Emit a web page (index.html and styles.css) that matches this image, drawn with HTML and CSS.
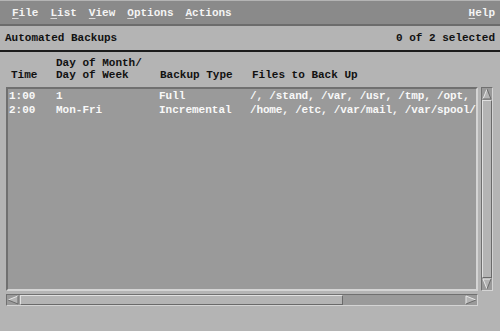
FILE: index.html
```html
<!DOCTYPE html>
<html lang="en">
<head>
  <meta charset="UTF-8">
  <title>Automated Backups</title>
  <link rel="stylesheet" href="styles.css">
</head>
<body>
  <div class="menubar">
    <span class="menu-item"><u>F</u>ile</span>
    <span class="menu-item"><u>L</u>ist</span>
    <span class="menu-item"><u>V</u>iew</span>
    <span class="menu-item"><u>O</u>ptions</span>
    <span class="menu-item"><u>A</u>ctions</span>
    <span class="menu-item help"><u>H</u>elp</span>
  </div>

  <div class="status">
    <span>Automated Backups</span>
    <span>0 of 2 selected</span>
  </div>

  <div class="headers">
    <div class="col-time">Time</div>
    <div class="col-day">Day of Month/<br>Day of Week</div>
    <div class="col-type">Backup Type</div>
    <div class="col-files">Files to Back Up</div>
  </div>

  <div class="list-area">
    <div class="list-box">
      <div class="row">
        <div>1:00</div>
        <div>1</div>
        <div>Full</div>
        <div class="files">/, /stand, /var, /usr, /tmp, /opt,</div>
      </div>
      <div class="row">
        <div>2:00</div>
        <div>Mon-Fri</div>
        <div>Incremental</div>
        <div class="files">/home, /etc, /var/mail, /var/spool/</div>
      </div>
    </div>

    <div class="vscroll">
      <svg class="arrow" width="10" height="12" viewBox="0 0 10 12">
        <polygon points="5,1 9,11 1,11" fill="#b4b4b4"/>
        <polyline points="1,11 5,1" fill="none" stroke="#e8e8e8" stroke-width="1"/>
        <polyline points="5,1 9,11 1,11" fill="none" stroke="#6a6a6a" stroke-width="1"/>
      </svg>
      <div class="vthumb"></div>
      <svg class="arrow" width="10" height="12" viewBox="0 0 10 12">
        <polygon points="1,1 9,1 5,11" fill="#b4b4b4"/>
        <polyline points="9,1 1,1 5,11" fill="none" stroke="#e8e8e8" stroke-width="1"/>
        <polyline points="9,1 5,11" fill="none" stroke="#6a6a6a" stroke-width="1"/>
      </svg>
    </div>

    <div class="hscroll">
      <svg class="arrow" width="12" height="10" viewBox="0 0 12 10">
        <polygon points="1,5 11,1 11,9" fill="#b4b4b4"/>
        <polyline points="11,1 1,5" fill="none" stroke="#e8e8e8" stroke-width="1"/>
        <polyline points="1,5 11,9 11,1" fill="none" stroke="#6a6a6a" stroke-width="1"/>
      </svg>
      <div class="hthumb"></div>
      <div class="htrough"></div>
      <svg class="arrow" width="12" height="10" viewBox="0 0 12 10">
        <polygon points="1,1 11,5 1,9" fill="#b4b4b4"/>
        <polyline points="1,9 1,1 11,5" fill="none" stroke="#e8e8e8" stroke-width="1"/>
        <polyline points="11,5 1,9" fill="none" stroke="#6a6a6a" stroke-width="1"/>
      </svg>
    </div>
  </div>
</body>
</html>
```

FILE: styles.css
```css
/* General Styles */
* {
  margin: 0;
  padding: 0;
  box-sizing: border-box;
}

body {
  font-family: 'Liberation Mono', 'DejaVu Sans Mono', monospace;
  font-size: 11px;
  font-weight: bold;
  background-color: #b4b4b4;
  color: #111;
  width: 500px;
  height: 331px;
  overflow: hidden;
}

/* Menu bar */
.menubar {
  display: flex;
  gap: 12px;
  margin-top: 1px;
  height: 25px;
  padding: 0 12px;
  align-items: center;
  background-color: #8a8a8a;
  border-bottom: 2px solid #6c6c6c;
  color: #f4f4f4;
}

.menu-item u {
  text-decoration-color: #d8d8d8;
  text-underline-offset: 2px;
}

.menu-item.help {
  margin-left: auto;
  margin-right: -7px;
}

/* Status line */
.status {
  display: flex;
  justify-content: space-between;
  align-items: center;
  height: 26px;
  padding: 0 5px;
  border-bottom: 2px solid #1c1c1c;
}

/* Column headers */
.headers {
  display: grid;
  grid-template-columns: 45px 104px 92px 1fr;
  align-items: end;
  height: 35px;
  padding: 0 0 6px 11px;
  line-height: 12px;
}

/* List + scrollbars */
.list-area {
  display: grid;
  grid-template-columns: 472px 12px;
  grid-template-rows: 204px 12px;
  column-gap: 3px;
  row-gap: 3px;
  padding-left: 6px;
}

.list-box {
  background-color: #9a9a9a;
  border: 2px solid;
  border-color: #707070 #d4d4d4 #d4d4d4 #707070;
  color: #f8f8f8;
  overflow: hidden;
}

.row {
  display: grid;
  grid-template-columns: 47px 103px 91px 1fr;
  padding-left: 1px;
  line-height: 14px;
  white-space: nowrap;
}

.row .files {
  letter-spacing: -0.15px;
}

.vscroll {
  display: flex;
  flex-direction: column;
  align-items: center;
  background-color: #9a9a9a;
  border: 1px solid;
  border-color: #707070 #d4d4d4 #d4d4d4 #707070;
}

.vthumb {
  flex: 1;
  width: 10px;
  background-color: #b4b4b4;
  border: 1px solid;
  border-color: #e0e0e0 #6a6a6a #6a6a6a #e0e0e0;
}

.hscroll {
  grid-column: 1;
  display: flex;
  align-items: center;
  background-color: #9a9a9a;
  border: 1px solid;
  border-color: #707070 #d4d4d4 #d4d4d4 #707070;
}

.hthumb {
  width: 323px;
  height: 10px;
  margin-left: 1px;
  background-color: #b4b4b4;
  border: 1px solid;
  border-color: #e0e0e0 #6a6a6a #6a6a6a #e0e0e0;
}

.htrough {
  flex: 1;
}

.arrow {
  display: block;
  flex: none;
}
```
